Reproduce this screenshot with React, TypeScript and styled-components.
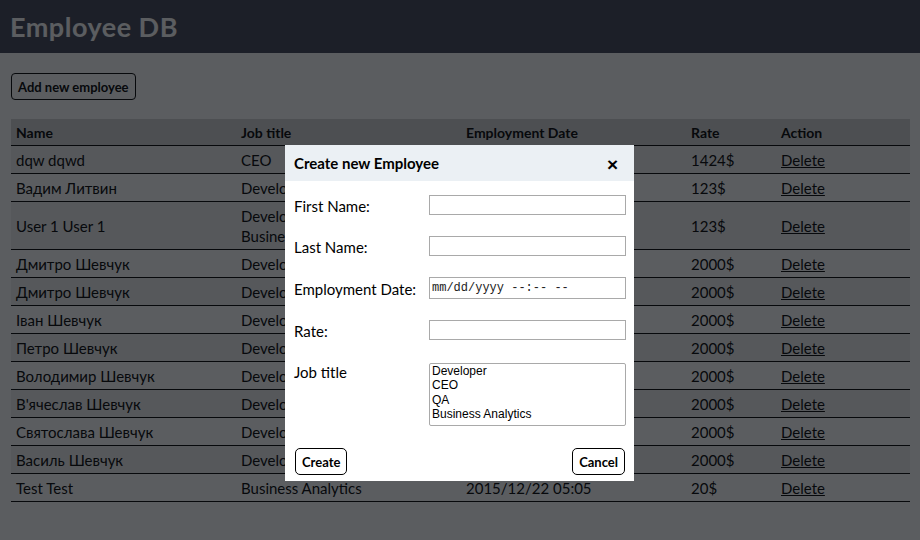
import React, { useState } from "react";
import styled, { createGlobalStyle } from "styled-components";

const GlobalStyle = createGlobalStyle`
  html, body {
    margin: 0;
    padding: 0;
    background: #ffffff;
  }
  body {
    font-family: "Comic Sans MS", "Lato", "DejaVu Sans", sans-serif;
    color: #000;
  }
`;

interface Employee {
  name: string;
  jobs: string[];
  date: string;
  rate: string;
}

const employees: Employee[] = [
  { name: "dqw dqwd", jobs: ["CEO"], date: "2015/12/22 05:05", rate: "1424$" },
  { name: "Вадим Литвин", jobs: ["Developer"], date: "2015/12/22 05:05", rate: "123$" },
  { name: "User 1 User 1", jobs: ["Developer", "Business Analytics"], date: "2015/12/22 05:05", rate: "123$" },
  { name: "Дмитро Шевчук", jobs: ["Developer"], date: "2015/12/22 05:05", rate: "2000$" },
  { name: "Дмитро Шевчук", jobs: ["Developer"], date: "2015/12/22 05:05", rate: "2000$" },
  { name: "Іван Шевчук", jobs: ["Developer"], date: "2015/12/22 05:05", rate: "2000$" },
  { name: "Петро Шевчук", jobs: ["Developer"], date: "2015/12/22 05:05", rate: "2000$" },
  { name: "Володимир Шевчук", jobs: ["Developer"], date: "2015/12/22 05:05", rate: "2000$" },
  { name: "В'ячеслав Шевчук", jobs: ["Developer"], date: "2015/12/22 05:05", rate: "2000$" },
  { name: "Святослава Шевчук", jobs: ["Developer"], date: "2015/12/22 05:05", rate: "2000$" },
  { name: "Василь Шевчук", jobs: ["Developer"], date: "2015/12/22 05:05", rate: "2000$" },
  { name: "Test Test", jobs: ["Business Analytics"], date: "2015/12/22 05:05", rate: "20$" },
];

const App: React.FC = () => {
  const [open, setOpen] = useState(true);
  return (
    <>
      <GlobalStyle />
      <Header>
        <Title>Employee DB</Title>
      </Header>
      <Content>
        <OutlineButton onClick={() => setOpen(true)}>Add new employee</OutlineButton>
        <Table>
          <colgroup>
            <Col $w={225} />
            <Col $w={225} />
            <Col $w={225} />
            <Col $w={90} />
            <Col />
          </colgroup>
          <thead>
            <tr>
              <Th>Name</Th>
              <Th>Job title</Th>
              <Th>Employment Date</Th>
              <Th>Rate</Th>
              <Th>Action</Th>
            </tr>
          </thead>
          <tbody>
            {employees.map((e, i) => (
              <Row key={i} $striped={i % 2 === 0}>
                <Td>{e.name}</Td>
                <Td>
                  {e.jobs.map((j) => (
                    <div key={j}>{j}</div>
                  ))}
                </Td>
                <Td>{e.date}</Td>
                <Td>{e.rate}</Td>
                <Td>
                  <DeleteLink href="#">Delete</DeleteLink>
                </Td>
              </Row>
            ))}
          </tbody>
        </Table>
      </Content>

      {open && (
        <>
          <Overlay onClick={() => setOpen(false)} />
          <Modal>
            <ModalHead>
              <ModalTitle>Create new Employee</ModalTitle>
              <CloseBtn onClick={() => setOpen(false)}>×</CloseBtn>
            </ModalHead>
            <ModalBody>
              <Field>
                <Label>First Name:</Label>
                <TextInput type="text" />
              </Field>
              <Field>
                <Label>Last Name:</Label>
                <TextInput type="text" />
              </Field>
              <Field>
                <Label>Employment Date:</Label>
                <DateInput type="text" placeholder="mm/dd/yyyy --:-- --" />
              </Field>
              <Field>
                <Label>Rate:</Label>
                <TextInput type="text" />
              </Field>
              <Field $top>
                <Label>Job title</Label>
                <JobSelect multiple size={4}>
                  <option>Developer</option>
                  <option>CEO</option>
                  <option>QA</option>
                  <option>Business Analytics</option>
                </JobSelect>
              </Field>
            </ModalBody>
            <ModalFoot>
              <ModalButton>Create</ModalButton>
              <ModalButton onClick={() => setOpen(false)}>Cancel</ModalButton>
            </ModalFoot>
          </Modal>
        </>
      )}
    </>
  );
};

export default App;

const Header = styled.div`
  height: 53px;
  background-color: #414455;
  display: flex;
  align-items: center;
  padding: 0 10px;
`;

const Title = styled.h1`
  margin: 0;
  color: #ffffff;
  font-size: 27px;
  font-weight: bold;
  letter-spacing: 0.5px;
`;

const Content = styled.div`
  padding: 20px 10px 30px 11px;
`;

const OutlineButton = styled.button`
  font-family: inherit;
  font-size: 13px;
  font-weight: bold;
  background: #fff;
  color: #000;
  border: 1px solid #000;
  border-radius: 4px;
  height: 27px;
  padding: 0 6px;
  cursor: pointer;
`;

const Table = styled.table`
  margin-top: 19px;
  width: 899px;
  table-layout: fixed;
  border-collapse: collapse;
  font-size: 15px;
  color: #000;
`;

const Col = styled.col<{ $w?: number }>`
  width: ${(p) => (p.$w ? `${p.$w}px` : "auto")};
`;

const Th = styled.th`
  text-align: left;
  font-weight: bold;
  font-size: 14px;
  background-color: #d4d4d4;
  padding: 4px 5px 3px;
  line-height: 19px;
  border-bottom: 1px solid #000;
`;

const Row = styled.tr<{ $striped: boolean }>`
  background-color: ${(p) => (p.$striped ? "#efefef" : "#ffffff")};
`;

const Td = styled.td`
  padding: 4px 5px 3px;
  line-height: 20px;
  vertical-align: middle;
  border-bottom: 1px solid #000;
`;

const DeleteLink = styled.a`
  color: #000;
  text-decoration: underline;
`;

const Overlay = styled.div`
  position: fixed;
  inset: 0;
  background-color: rgba(10, 14, 18, 0.67);
`;

const Modal = styled.div`
  position: fixed;
  top: 145px;
  left: 285px;
  width: 349px;
  background: #fff;
  display: flex;
  flex-direction: column;
`;

const ModalHead = styled.div`
  height: 36px;
  background-color: #ebf0f4;
  display: flex;
  align-items: center;
  justify-content: space-between;
  padding: 0 16px 0 9px;
`;

const ModalTitle = styled.div`
  font-size: 15px;
  font-weight: bold;
`;

const CloseBtn = styled.span`
  font-family: "Liberation Sans", sans-serif;
  font-size: 19px;
  font-weight: bold;
  line-height: 1;
  padding-top: 3px;
  cursor: pointer;
`;

const ModalBody = styled.div`
  padding: 14px 8px 0 9px;
  display: flex;
  flex-direction: column;
  gap: 21px;
`;

const Field = styled.div<{ $top?: boolean }>`
  display: flex;
  align-items: ${(p) => (p.$top ? "flex-start" : "center")};
`;

const Label = styled.label`
  width: 135px;
  font-size: 15px;
  padding-top: 2px;
`;

const TextInput = styled.input`
  box-sizing: border-box;
  width: 197px;
  height: 20px;
  border: 1px solid #a9a9a9;
  padding: 0 3px;
  font-family: "Liberation Sans", sans-serif;
  font-size: 13px;
`;

const DateInput = styled(TextInput)`
  height: 22px;
  font-family: "Liberation Mono", monospace;
  font-size: 12px;
  padding: 0 2px;
  &::placeholder {
    color: #222;
    opacity: 1;
  }
`;

const JobSelect = styled.select`
  box-sizing: border-box;
  width: 197px;
  height: 63px;
  margin-top: 2px;
  border: 1px solid #a9a9a9;
  font-family: "Liberation Sans", Arial, sans-serif;
  font-size: 12px;
  overflow-y: scroll;
  scrollbar-color: #cdcdcd #f0f0f0;
  padding: 0;
  option {
    padding: 0 2px;
    line-height: 15px;
  }
`;

const ModalFoot = styled.div`
  display: flex;
  justify-content: space-between;
  padding: 22px 9px 6px 10px;
`;

const ModalButton = styled.button`
  font-family: inherit;
  font-size: 13px;
  font-weight: bold;
  background: #fff;
  color: #000;
  border: 1px solid #000;
  border-radius: 5px;
  height: 27px;
  padding: 0 6px;
  cursor: pointer;
`;
